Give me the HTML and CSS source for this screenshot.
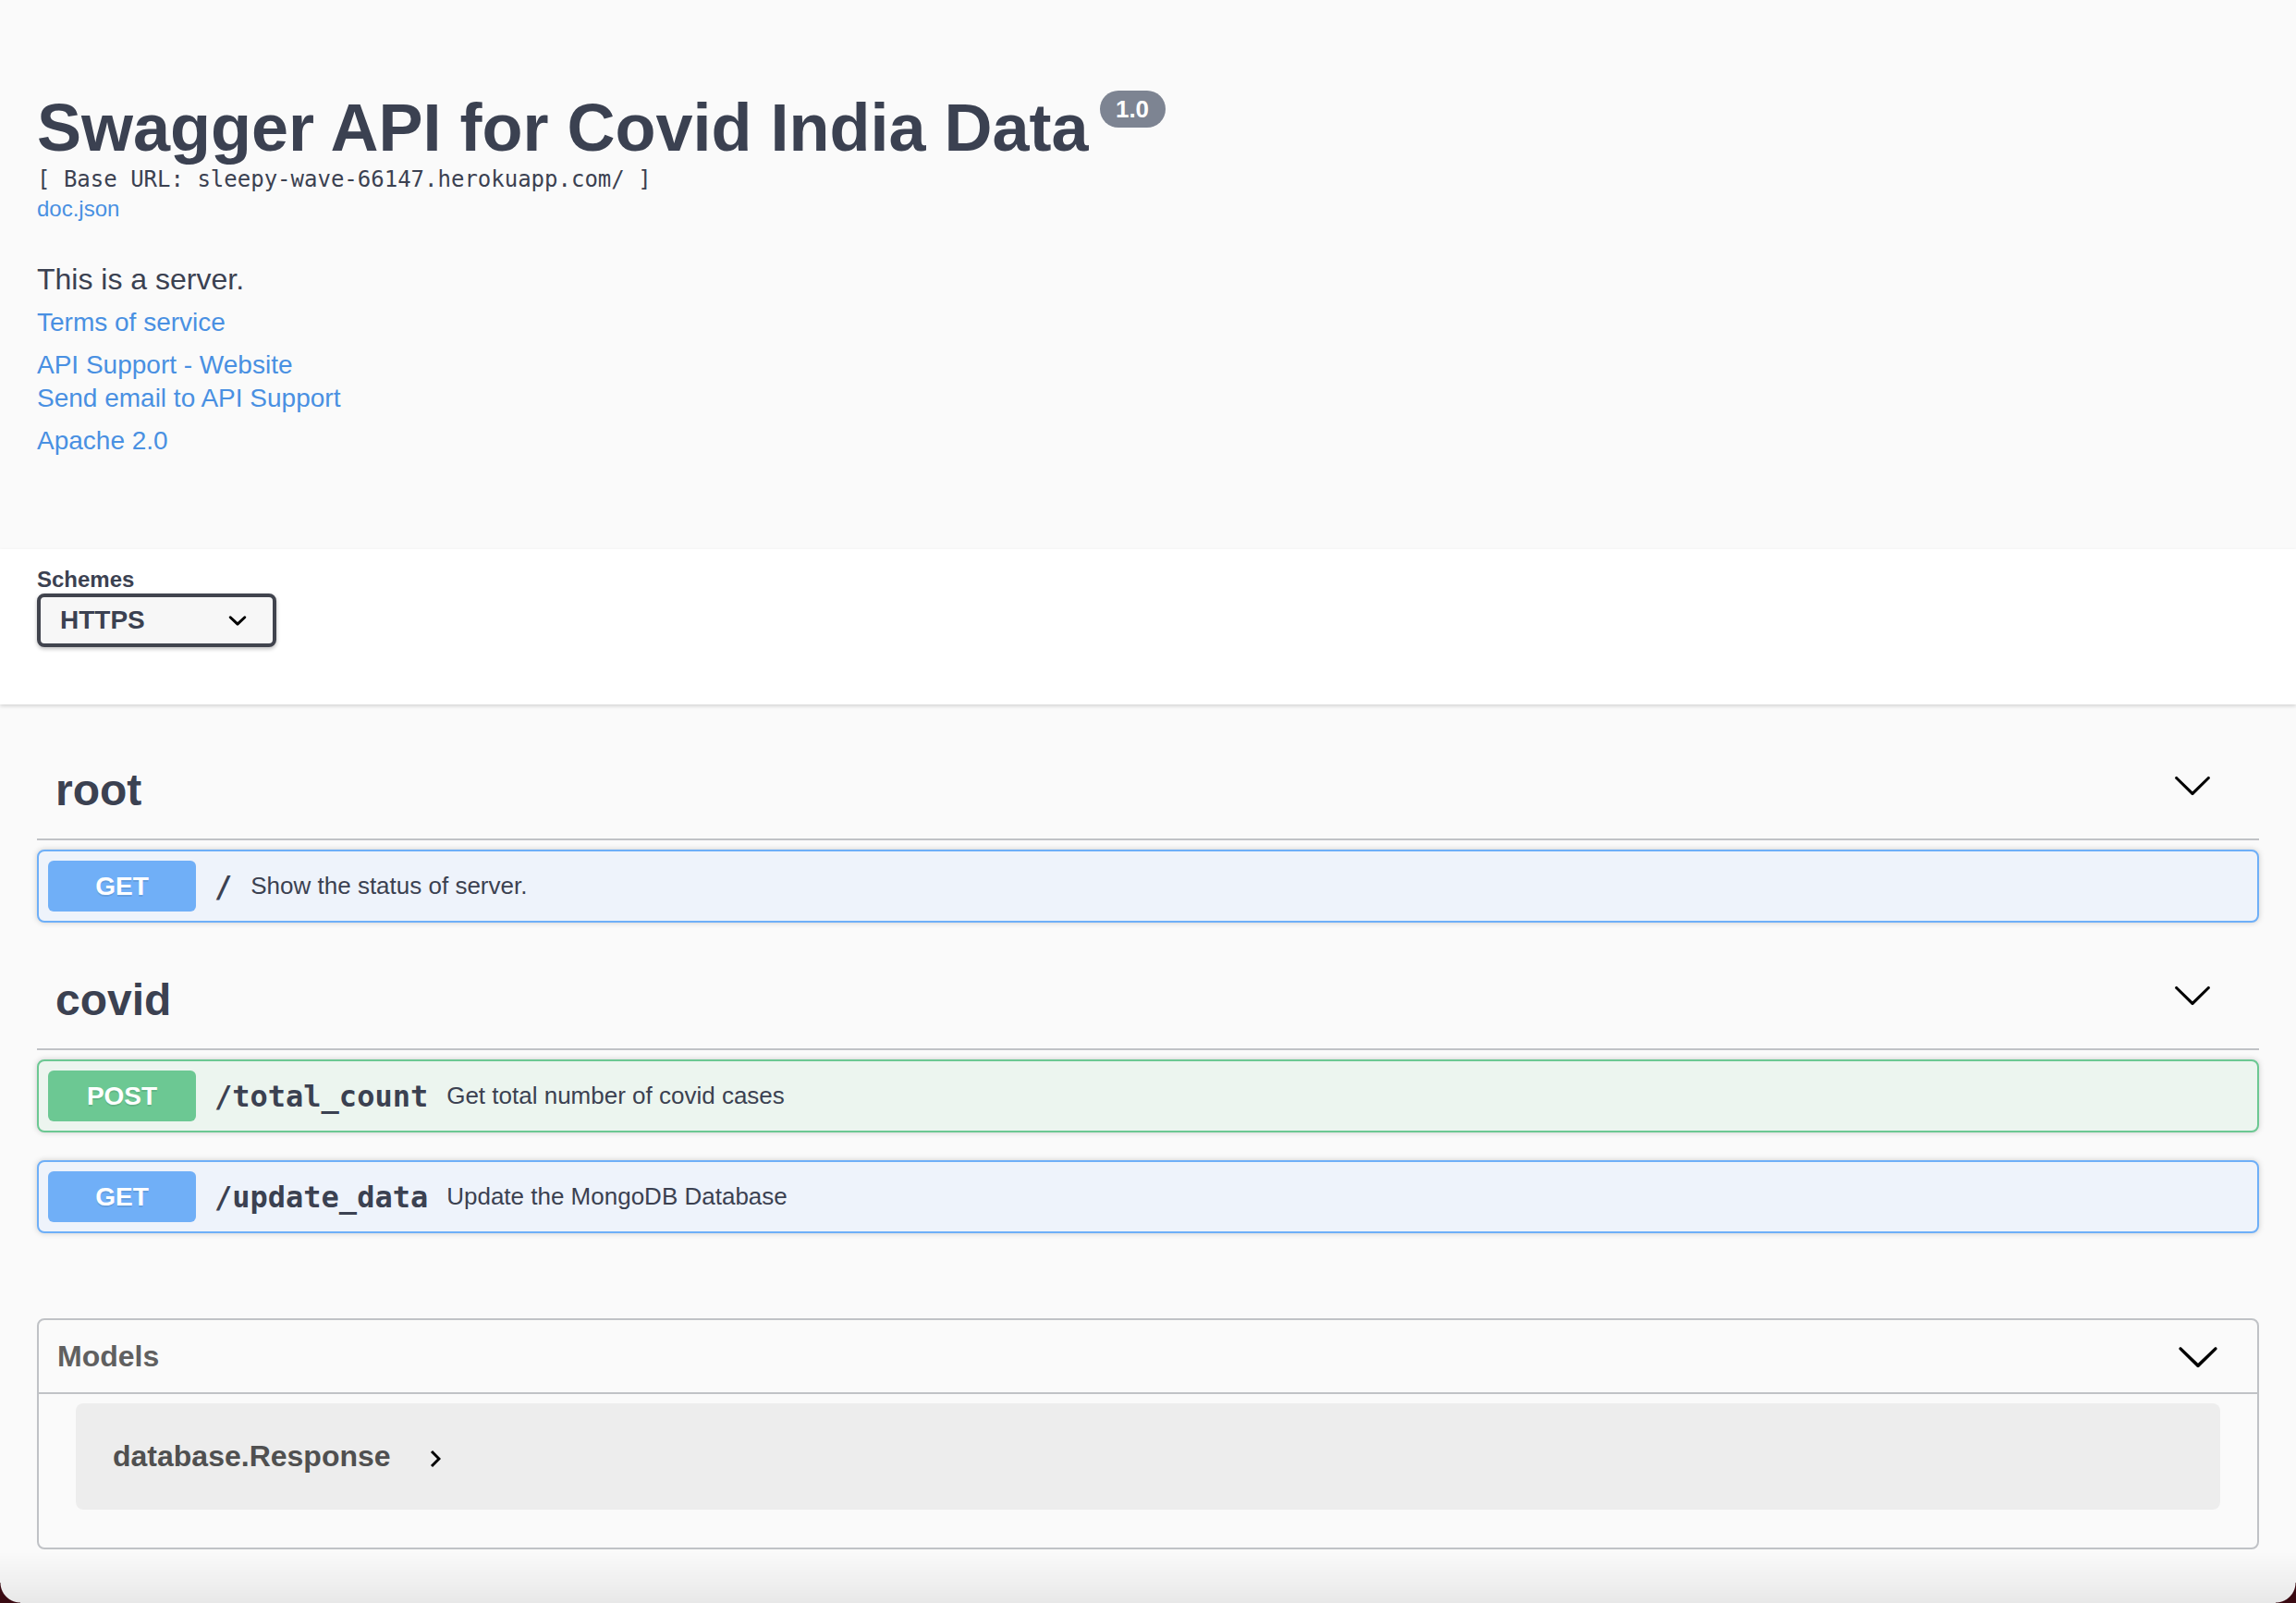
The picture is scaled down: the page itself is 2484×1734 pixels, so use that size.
FILE: index.html
```html
<!DOCTYPE html>
<html>
<head lang="en">
    <meta charset="utf-8">
    <title>Swagger UI</title>
    <link rel="stylesheet" href="styles.css">
</head>
<body>

<div class="info wrapper">
    <div class="title-row">
        <h2 class="title">Swagger API for Covid India Data</h2>
        <span class="version">1.0</span>
    </div>
    <pre class="base-url">[ Base URL: sleepy-wave-66147.herokuapp.com/ ]</pre>
    <a class="doc-link" href="#">doc.json</a>
    <p class="description">This is a server.</p>
    <div class="info-group"><a href="#">Terms of service</a></div>
    <div class="info-group">
        <div><a href="#">API Support - Website</a></div>
        <a href="#">Send email to API Support</a>
    </div>
    <div class="info-group"><a href="#">Apache 2.0</a></div>
</div>

<div class="scheme-container">
    <div class="wrapper">
        <label class="schemes-label">Schemes</label>
        <div class="select">
            <span>HTTPS</span>
            <svg width="40" height="40" viewBox="0 0 20 20"><path d="M13.418 7.859a.695.695 0 01.978 0 .68.68 0 010 .969l-3.908 3.83a.697.697 0 01-.979 0l-3.908-3.83a.68.68 0 010-.969.695.695 0 01.978 0L10 11l3.418-3.141z"/></svg>
        </div>
    </div>
</div>

<div class="operations wrapper">
    <div class="tag-section">
        <h3 class="opblock-tag">
            <span class="tag-name">root</span>
            <svg class="arrow" width="44" height="44" viewBox="0 0 20 20"><path d="M17.418 6.109c.272-.268.709-.268.979 0s.271.701 0 .969l-7.908 7.83c-.27.268-.707.268-.979 0l-7.908-7.83c-.27-.268-.27-.701 0-.969.271-.268.709-.268.979 0L10 13.250l7.418-7.141z"/></svg>
        </h3>
        <div class="opblock opblock-get">
            <div class="summary">
                <span class="method">GET</span>
                <span class="path">/</span>
                <span class="summary-text">Show the status of server.</span>
            </div>
        </div>
    </div>

    <div class="tag-section">
        <h3 class="opblock-tag">
            <span class="tag-name">covid</span>
            <svg class="arrow" width="44" height="44" viewBox="0 0 20 20"><path d="M17.418 6.109c.272-.268.709-.268.979 0s.271.701 0 .969l-7.908 7.83c-.27.268-.707.268-.979 0l-7.908-7.83c-.27-.268-.27-.701 0-.969.271-.268.709-.268.979 0L10 13.25l7.418-7.141z"/></svg>
        </h3>
        <div class="opblock opblock-post">
            <div class="summary">
                <span class="method">POST</span>
                <span class="path">/total_count</span>
                <span class="summary-text">Get total number of covid cases</span>
            </div>
        </div>
        <div class="opblock opblock-get">
            <div class="summary">
                <span class="method">GET</span>
                <span class="path">/update_data</span>
                <span class="summary-text">Update the MongoDB Database</span>
            </div>
        </div>
    </div>

    <section class="models">
        <h4>
            <span class="models-title">Models</span>
            <svg class="models-arrow" width="48" height="48" viewBox="0 0 20 20"><path d="M17.418 6.109c.272-.268.709-.268.979 0s.271.701 0 .969l-7.908 7.83c-.27.268-.707.268-.979 0l-7.908-7.830c-.27-.268-.27-.701 0-.969.271-.268.709-.268.979 0L10 13.25l7.418-7.141z"/></svg>
        </h4>
        <div class="model-container">
            <span class="model-title">database.Response</span>
            <svg class="model-toggle" width="12" height="20" viewBox="0 0 12 20"><path d="M2 2l8 8-8 8"/></svg>
        </div>
    </section>
</div>

<div class="window-edge">
    <div class="corner corner-left"></div>
    <div class="corner corner-right"></div>
</div>

</body>
</html>
```

FILE: styles.css
```css
* { box-sizing: border-box; }

html { overflow: hidden; }

body {
    margin: 0;
    background: #fafafa;
    font-family: 'Liberation Sans', Arial, sans-serif;
    color: #3b4151;
}

a {
    color: #4990e2;
    text-decoration: none;
}

.wrapper { padding: 0 40px; }

/* info block */

.info {
    padding-top: 97px;
    padding-bottom: 99px;
}

.title-row {
    display: flex;
    align-items: flex-start;
}

.title {
    margin: 0;
    font-size: 72px;
    line-height: 83px;
    font-weight: bold;
}

.version {
    margin: 1px 0 0 12px;
    width: 71px;
    padding: 4px 0;
    font-size: 26px;
    line-height: 32px;
    font-weight: bold;
    text-align: center;
    color: #fff;
    background: #7d8492;
    border-radius: 20px;
}

.base-url {
    margin: 0;
    font-family: 'DejaVu Sans Mono', 'Liberation Mono', monospace;
    font-size: 24px;
    line-height: 28px;
}

.doc-link {
    display: block;
    font-size: 24px;
    line-height: 36px;
}

.description {
    margin: 37px 0 8px;
    font-size: 32px;
    line-height: 42px;
}

.info-group {
    font-size: 28px;
    line-height: 36px;
}

.info-group + .info-group { margin-top: 10px; }

/* schemes */

.scheme-container {
    background: #fff;
    padding: 19px 0 62px;
    box-shadow: 0 2px 4px 0 rgba(0, 0, 0, 0.15);
}

.schemes-label {
    display: block;
    font-size: 24px;
    line-height: 28px;
    font-weight: bold;
}

.select {
    display: flex;
    align-items: center;
    justify-content: space-between;
    width: 259px;
    height: 58px;
    margin-top: 1px;
    padding: 0 20px 0 21px;
    font-size: 28px;
    font-weight: bold;
    background: #f7f7f7;
    border: 4px solid #41444e;
    border-radius: 8px;
    box-shadow: 0 2px 4px 0 rgba(0, 0, 0, 0.25);
}

.select svg { display: block; margin-right: -2px; }

/* operations */

.operations { margin-top: 47px; }

/* flex column keeps the opblock margins from collapsing into the section */
.tag-section {
    display: flex;
    flex-direction: column;
    margin-bottom: 8px;
}

.opblock-tag {
    display: flex;
    align-items: center;
    margin: 0 0 10px;
    padding: 17px 40px 23px 20px;
    font-size: 48px;
    line-height: 58px;
    font-weight: bold;
    border-bottom: 2px solid rgba(59, 65, 81, 0.3);
}

.tag-name { flex: 1; }

.arrow {
    display: block;
    margin: -12px 10px 0 0;
}

.opblock {
    margin: 0 0 30px;
    border: 2px solid #000;
    border-radius: 8px;
    box-shadow: 0 0 6px rgba(0, 0, 0, 0.19);
}

.opblock-get {
    border-color: #6eaff8;
    background: #eef3fb;
}

.opblock-post {
    border-color: #6cc893;
    background: #ecf5ef;
}

.summary {
    display: flex;
    align-items: center;
    padding: 10px;
}

.method {
    min-width: 160px;
    padding: 12px 30px;
    font-size: 28px;
    line-height: 31px;
    font-weight: bold;
    text-align: center;
    color: #fff;
    border-radius: 6px;
    text-shadow: 0 2px 0 rgba(0, 0, 0, 0.1);
}

.opblock-get .method { background: #70aff7; }
.opblock-post .method { background: #6cc893; }

.path {
    padding: 0 20px;
    font-family: 'DejaVu Sans Mono', 'Liberation Mono', monospace;
    font-size: 32px;
    font-weight: bold;
}

.summary-text {
    flex: 1;
    font-size: 26px;
}

/* models */

.models {
    margin-top: 62px;
    padding-bottom: 11px;
    border: 2px solid rgba(59, 65, 81, 0.3);
    border-radius: 8px;
}

.models h4 {
    display: flex;
    align-items: center;
    margin: 0 0 10px;
    padding: 20px 40px 20px 20px;
    font-size: 32px;
    line-height: 38px;
    color: #606060;
    border-bottom: 2px solid rgba(59, 65, 81, 0.3);
}

.models-title { flex: 1; }

.models-arrow {
    display: block;
    margin: -5px 0;
}

.model-container {
    display: flex;
    align-items: center;
    height: 115px;
    margin: 0 40px 30px;
    padding: 0 40px;
    background: rgba(0, 0, 0, 0.05);
    border-radius: 8px;
}

.model-title {
    font-size: 32px;
    font-weight: bold;
    color: #505050;
}

.model-toggle {
    display: block;
    margin: 4px 0 0 42px;
}

.model-toggle path {
    fill: none;
    stroke: #000;
    stroke-width: 3;
}

/* bottom edge of the window */

.window-edge {
    position: fixed;
    left: 0;
    right: 0;
    bottom: 0;
    height: 56px;
    pointer-events: none;
    background: linear-gradient(to bottom, rgba(0, 0, 0, 0), rgba(0, 0, 0, 0.07));
}

.corner {
    position: absolute;
    bottom: 0;
    width: 22px;
    height: 22px;
}

.corner-left {
    left: 0;
    background: radial-gradient(circle at 22px 0, transparent 21px, #3a0a12 22px);
}

.corner-right {
    right: 0;
    background: radial-gradient(circle at 0 0, transparent 21px, #3a0a12 22px);
}
```
